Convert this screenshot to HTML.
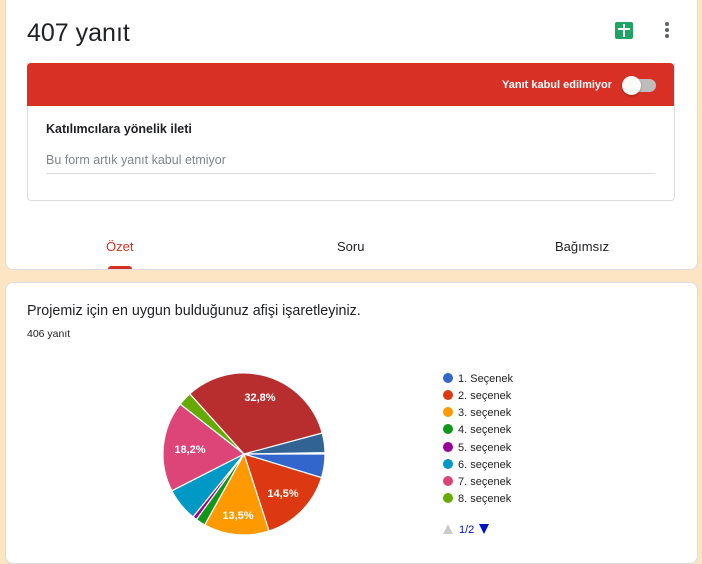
<!DOCTYPE html>
<html><head><meta charset="utf-8"><style>
body{margin:0;width:702px;height:548px;background:#fde4c2;font-family:"Liberation Sans",sans-serif;position:relative;overflow:hidden}
.card{position:absolute;background:#fff;border:1px solid #dadce0;border-radius:8px}
.abs{position:absolute;white-space:nowrap}
</style></head><body>
<div class="card" style="left:5px;top:-8px;width:691px;height:276px"></div>
<div class="abs" style="left:27px;top:19px;font-size:25px;color:#202124">407 yanıt</div>
<div class="abs" style="left:615px;top:22px;width:18px;height:17px;background:#1fa463;border-radius:2px"></div>
<div class="abs" style="left:623px;top:24px;width:2px;height:13px;background:#fff"></div>
<div class="abs" style="left:618px;top:28px;width:12px;height:2px;background:#fff"></div>
<div class="abs" style="left:665px;top:22px;width:4px;height:4px;border-radius:2px;background:#5f6368;box-shadow:0 6px 0 #5f6368,0 12px 0 #5f6368"></div>
<div class="abs" style="left:27px;top:63px;width:646px;height:137px;border:1px solid #dadce0;border-top:none;border-radius:0 0 4px 4px"></div>
<div class="abs" style="left:27px;top:63px;width:647px;height:43px;background:#d93025;border-radius:4px 4px 0 0"></div>
<div class="abs" style="left:502px;top:79px;font-size:11px;font-weight:bold;color:#fff">Yanıt kabul edilmiyor</div>
<div class="abs" style="left:624px;top:79px;width:32px;height:13px;border-radius:7px;background:#bdbdbd"></div>
<div class="abs" style="left:622px;top:76px;width:19px;height:19px;border-radius:10px;background:#fafafa;box-shadow:0 1px 2px rgba(0,0,0,.3)"></div>
<div class="abs" style="left:46px;top:122px;font-size:12.5px;font-weight:bold;color:#202124">Katılımcılara yönelik ileti</div>
<div class="abs" style="left:46px;top:153px;font-size:12.5px;color:#80868b">Bu form artık yanıt kabul etmiyor</div>
<div class="abs" style="left:46px;top:173px;width:609px;height:1px;background:#dadce0"></div>
<div class="abs" style="left:106px;top:239px;font-size:13px;color:#d93025">Özet</div>
<div class="abs" style="left:108px;top:266px;width:24px;height:3px;background:#d93025;border-radius:3px 3px 0 0"></div>
<div class="abs" style="left:337px;top:239px;font-size:13px;color:#202124">Soru</div>
<div class="abs" style="left:555px;top:239px;font-size:13px;color:#202124">Bağımsız</div>
<div class="card" style="left:5px;top:282px;width:691px;height:280px"></div>
<div class="abs" style="left:27px;top:303px;font-size:14.3px;color:#202124">Projemiz için en uygun bulduğunuz afişi işaretleyiniz.</div>
<div class="abs" style="left:27px;top:328px;font-size:10.5px;color:#202124">406 yanıt</div>
<svg class="abs" style="left:0;top:0" width="702" height="548">
<g stroke="#fff" stroke-width="1.2">
<path d="M244,454 L322.2,433 A81,81 0 0 1 325,452.6Z" fill="#316395"/>
<path d="M244,454 L325,454 A81,81 0 0 1 321.5,477.7Z" fill="#3366cc"/>
<path d="M244,454 L321.5,477.7 A81,81 0 0 1 269,531Z" fill="#dc3912"/>
<path d="M244,454 L269,531 A81,81 0 0 1 204.7,524.9Z" fill="#ff9900"/>
<path d="M244,454 L204.7,524.9 A81,81 0 0 1 196.4,519.5Z" fill="#109618"/>
<path d="M244,454 L196.4,519.5 A81,81 0 0 1 193,516.9Z" fill="#990099"/>
<path d="M244,454 L193,516.9 A81,81 0 0 1 171.8,490.8Z" fill="#0099c6"/>
<path d="M244,454 L171.8,490.8 A81,81 0 0 1 180.2,404.1Z" fill="#dd4477"/>
<path d="M244,454 L180.2,404.1 A81,81 0 0 1 189.8,393.8Z" fill="#66aa00"/>
<path d="M244,454 L189.8,393.8 A81,81 0 0 1 322.2,433Z" fill="#b82e2e"/>
</g>
<g font-family="Liberation Sans,sans-serif" font-size="11" font-weight="bold" fill="#fff" text-anchor="middle">
<text x="260" y="401">32,8%</text><text x="190" y="453">18,2%</text>
<text x="283" y="497">14,5%</text><text x="238" y="519">13,5%</text>
</g>
<g font-family="Liberation Sans,sans-serif" font-size="11" fill="#222">
<circle cx="448" cy="378" r="5" fill="#3366cc"/><text x="458" y="382">1. Seçenek</text>
<circle cx="448" cy="395" r="5" fill="#dc3912"/><text x="458" y="399">2. seçenek</text>
<circle cx="448" cy="412" r="5" fill="#ff9900"/><text x="458" y="416">3. seçenek</text>
<circle cx="448" cy="429" r="5" fill="#109618"/><text x="458" y="433">4. seçenek</text>
<circle cx="448" cy="447" r="5" fill="#990099"/><text x="458" y="451">5. seçenek</text>
<circle cx="448" cy="464" r="5" fill="#0099c6"/><text x="458" y="468">6. seçenek</text>
<circle cx="448" cy="481" r="5" fill="#dd4477"/><text x="458" y="485">7. seçenek</text>
<circle cx="448" cy="498" r="5" fill="#66aa00"/><text x="458" y="502">8. seçenek</text>
<path d="M443,534 L448,524 L453,534Z" fill="#ccc"/>
<text x="459" y="533" fill="#0011cc">1/2</text>
<path d="M479,524 L489,524 L484,534Z" fill="#0011cc"/>
</g>
</svg>
</body></html>
